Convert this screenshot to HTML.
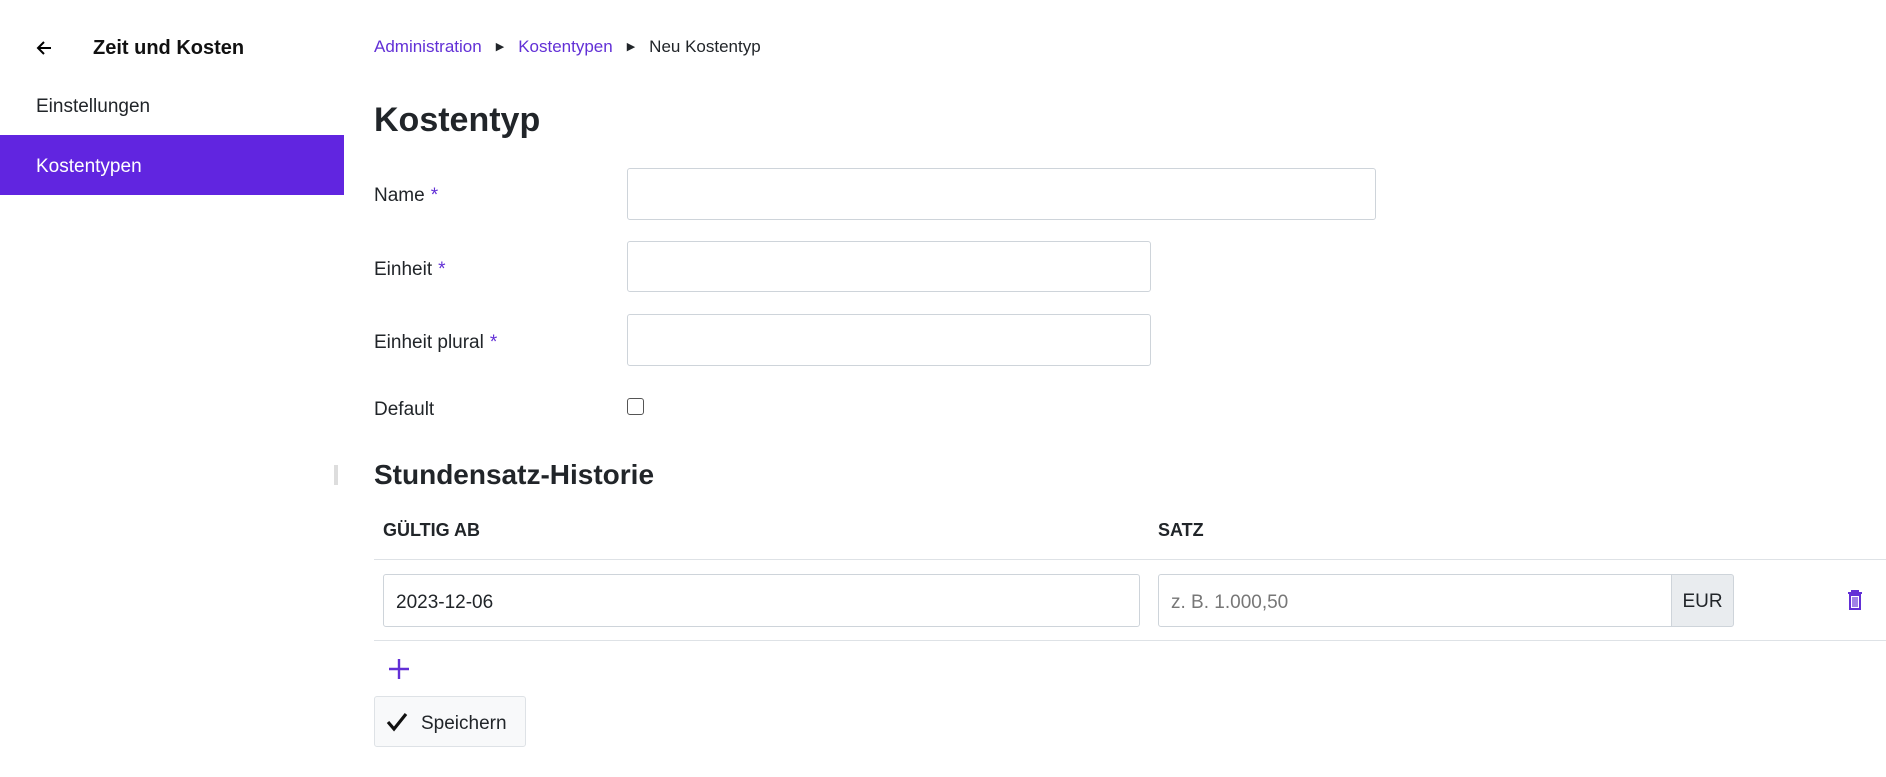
<!DOCTYPE html>
<html><head><meta charset="utf-8"><style>
*{box-sizing:border-box;margin:0;padding:0}
body{width:1886px;height:777px;background:#fff;font-family:"Liberation Sans",sans-serif;color:#212529;font-size:19px;position:relative;overflow:hidden}
.a{position:absolute;white-space:nowrap}
.p{color:#6230d6}
.inp{position:absolute;border:1px solid #ced4da;border-radius:3px;background:#fff}
.lbl{position:absolute;left:374px;font-size:19px}
.star{color:#6230d6;margin-left:6px}
</style></head><body>
<svg class="a" style="left:35px;top:39px" width="18" height="18" viewBox="0 0 18 18"><path d="M16 9H3M9 3L3 9l6 6" stroke="#000" stroke-width="2" fill="none"/></svg>
<div class="a" style="left:93px;top:37px;font-size:20px;font-weight:bold;color:#111">Zeit und Kosten</div>
<div class="a" style="left:36px;top:96px;font-size:19px">Einstellungen</div>
<div class="a" style="left:0;top:135px;width:344px;height:60px;background:#6125e0"></div>
<div class="a" style="left:36px;top:156px;font-size:19px;color:#fff">Kostentypen</div>
<div class="a" style="left:374px;top:37px;font-size:17px"><span class="p">Administration</span><span style="font-size:11px;margin:0 14px;vertical-align:2px">&#9654;</span><span class="p">Kostentypen</span><span style="font-size:11px;margin:0 14px;vertical-align:2px">&#9654;</span><span>Neu Kostentyp</span></div>
<div class="a" style="left:374px;top:101px;font-size:34px;font-weight:bold">Kostentyp</div>
<div class="lbl" style="top:185px">Name<span class="star">*</span></div>
<div class="inp" style="left:627px;top:168px;width:749px;height:52px"></div>
<div class="lbl" style="top:259px">Einheit<span class="star">*</span></div>
<div class="inp" style="left:627px;top:241px;width:524px;height:51px"></div>
<div class="lbl" style="top:332px">Einheit plural<span class="star">*</span></div>
<div class="inp" style="left:627px;top:314px;width:524px;height:52px"></div>
<div class="lbl" style="top:399px">Default</div>
<div class="a" style="left:627px;top:398px;width:17px;height:17px;border:1.5px solid #555;border-radius:3px"></div>
<div class="a" style="left:334px;top:465px;width:4px;height:20px;background:#ddd"></div>
<div class="a" style="left:374px;top:459px;font-size:28px;font-weight:bold">Stundensatz-Historie</div>
<div class="a" style="left:383px;top:520px;font-size:18px;font-weight:bold">GÜLTIG AB</div>
<div class="a" style="left:1158px;top:520px;font-size:18px;font-weight:bold">SATZ</div>
<div class="a" style="left:374px;top:559px;width:1512px;height:1px;background:#dee2e6"></div>
<div class="inp" style="left:383px;top:574px;width:757px;height:53px"></div>
<div class="a" style="left:396px;top:592px;font-size:19px">2023-12-06</div>
<div class="inp" style="left:1158px;top:574px;width:515px;height:53px;border-radius:3px 0 0 3px"></div>
<div class="a" style="left:1171px;top:592px;font-size:19px;color:#777">z. B. 1.000,50</div>
<div class="a" style="left:1671px;top:574px;width:63px;height:53px;background:#e9ecef;border:1px solid #ced4da;border-radius:0 3px 3px 0;text-align:center;line-height:53px;font-size:19px">EUR</div>
<svg class="a" style="left:1847px;top:590px" width="16" height="20" viewBox="0 0 16 20"><path d="M1 3h14M5 3V1h6v2M3 5h10v14H3z" stroke="#6230d6" stroke-width="2" fill="none"/><path d="M6 7v10M8 7v10M10 7v10" stroke="#6230d6" stroke-width="1.2"/></svg>
<div class="a" style="left:374px;top:640px;width:1512px;height:1px;background:#dee2e6"></div>
<svg class="a" style="left:388px;top:658px" width="22" height="22" viewBox="0 0 22 22"><path d="M11 1v20M1 11h20" stroke="#6230d6" stroke-width="2.4"/></svg>
<div class="a" style="left:374px;top:696px;width:152px;height:51px;background:#f8f9fa;border:1px solid #dee2e6;border-radius:3px"></div>
<svg class="a" style="left:386px;top:712px" width="22" height="20" viewBox="0 0 22 20"><path d="M2 10l6 7L20 2" stroke="#111" stroke-width="3.2" fill="none"/></svg>
<div class="a" style="left:421px;top:713px;font-size:19px">Speichern</div>
</body></html>
